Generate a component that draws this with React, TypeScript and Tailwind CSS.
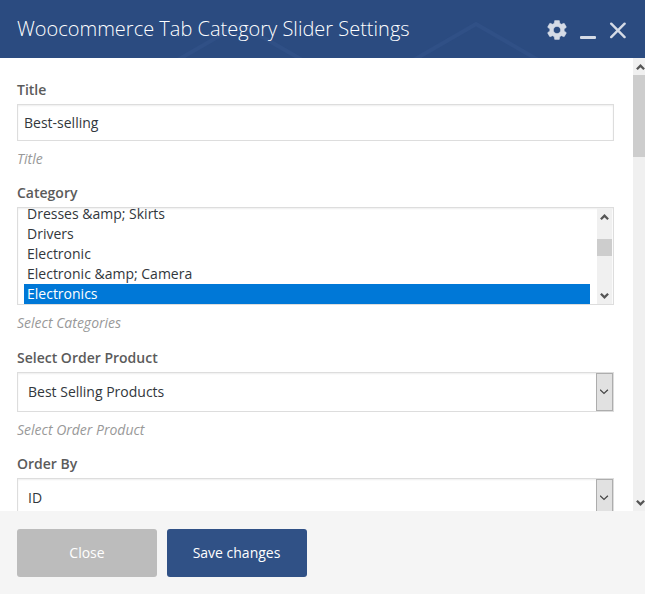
import React from "react";

function ScrollArrow({ up = false }: { up?: boolean }) {
  return (
    <svg
      width="9"
      height="8"
      viewBox="0 0 9 8"
      fill="none"
      stroke="#555555"
      strokeWidth="2.3"
      className="block shrink-0"
    >
      <path d={up ? "M.9 6.200 4.500 2.600 8.100 6.200" : "M.9 1.800 4.500 5.400 8.100 1.800"} />
    </svg>
  );
}

function SelectArrow() {
  return (
    <svg
      width="9"
      height="8"
      viewBox="0 0 9 8"
      fill="none"
      stroke="#444444"
      strokeWidth="1.200"
      className="block shrink-0"
    >
      <path d="M.1 1.700 4 5.500 7.900 1.700" />
    </svg>
  );
}

function Label({ children }: { children: React.ReactNode }) {
  return <div className="mb-1 h-5 text-sm leading-5 font-semibold text-[#5b5b5b]">{children}</div>;
}

function Hint({ children }: { children: React.ReactNode }) {
  return <div className="mt-2 h-5 text-sm leading-5 text-[#999999] italic">{children}</div>;
}

const fieldBox = "border border-[#dddddd] bg-white shadow-[inset_0_1px_2px_rgba(0,0,0,0.07)]";

function Select({ value }: { value: string }) {
  return (
    <div className={`flex h-10 items-stretch justify-between pl-2.5 text-sm text-[#32373c] ${fieldBox}`}>
      <span className="leading-[37px]">{value}</span>
      <span className="flex w-[17px] items-center justify-center border border-[#adadad] bg-[#e1e1e1]">
        <SelectArrow />
      </span>
    </div>
  );
}

const options = ["Dresses &amp; Skirts", "Drivers", "Electronic", "Electronic &amp; Camera", "Electronics"];

export default function App() {
  return (
    <div className="flex h-[594px] w-[645px] flex-col overflow-hidden bg-white font-['Open_Sans','Noto_Sans',sans-serif]">
      <header className="relative flex h-[58px] shrink-0 items-center justify-between bg-[#2b4b80] pr-[18px] pl-[17px]">
        <svg
          className="absolute top-0 left-0"
          width="645"
          height="58"
          fill="none"
          stroke="#305086"
          strokeWidth="4"
        >
          <path d="M176 61 240 24 304 61M412 61 476 24 540 61" />
        </svg>
        <h1 className="relative text-[20px] leading-[58px] font-light whitespace-nowrap text-white">
          Woocommerce Tab Category Slider Settings
        </h1>
        <div className="relative flex h-5 items-center text-[#d5dbe6]">
          <svg
            width="20"
            height="20"
            viewBox="2 2 20 20"
            fill="currentColor"
            stroke="currentColor"
            strokeWidth="0.5"
            className="mt-0.5"
          >
            <path d="M19.140 12.940c.04-.3.06-.61.06-.94 0-.32-.02-.64-.07-.94l2.030-1.580c.18-.14.23-.41.12-.61l-1.920-3.320c-.12-.22-.37-.29-.59-.22l-2.390.96c-.5-.38-1.030-.7-1.620-.94l-.36-2.540c-.04-.24-.24-.41-.48-.41h-3.840c-.24 0-.43.17-.47.41l-.36 2.540c-.59.24-1.130.57-1.620.94l-2.390-.96c-.22-.08-.47 0-.59.22L2.740 8.870c-.12.21-.08.47.12.61l2.030 1.580c-.05.3-.09.63-.09.94s.02.64.07.94l-2.030 1.580c-.18.14-.23.41-.12.61l1.920 3.320c.12.22.37.29.59.22l2.390-.96c.5.38 1.030.7 1.620.94l.36 2.540c.05.24.24.41.48.41h3.840c.24 0 .44-.17.47-.41l.36-2.540c.59-.24 1.130-.56 1.620-.94l2.390.96c.22.08.47 0 .59-.22l1.920-3.320c.12-.22.07-.47-.12-.61l-2.010-1.580zM12 15.600c-1.980 0-3.600-1.620-3.600-3.600s1.620-3.600 3.600-3.600 3.600 1.620 3.600 3.600-1.620 3.600-3.600 3.600z" />
          </svg>
          <span className="mt-[17px] ml-[13px] h-[3px] w-4 rounded-[1px] bg-[#d5dbe6]" />
          <svg
            width="17"
            height="17"
            viewBox="0 0 17 17"
            fill="none"
            stroke="currentColor"
            strokeWidth="2.400"
            strokeLinecap="round"
            className="mt-[3px] mr-px ml-[13px]"
          >
            <path d="m2.200 1.700 13.400 13.400m0-13.400L2.200 15.100" />
          </svg>
        </div>
      </header>

      <div className="flex h-[453px] shrink-0 overflow-hidden">
        <main className="w-[633px] shrink-0 pt-[22px] pr-[19px] pl-[17px]">
          <Label>Title</Label>
          <div className={`h-[37px] px-1.5 text-sm leading-[35px] text-[#32373c] ${fieldBox}`}>Best-selling</div>
          <Hint>Title</Hint>

          <div className="mt-[14px]">
            <Label>Category</Label>
            <div className={`flex h-[98px] overflow-hidden pr-px ${fieldBox}`}>
              <ul className="-mt-1 flex-1 pr-[7px] pl-1.5 text-sm leading-5 text-[#32373c]">
                {options.map((name, i) => (
                  <li key={name} className={i === 4 ? "h-5 bg-[#0078d7] pl-[3px] text-white" : "h-5 pl-[3px]"}>
                    {name}
                  </li>
                ))}
              </ul>
              <div className="flex w-[15px] flex-col items-center bg-[#f0f0f0]">
                <div className="flex h-[31px] items-start pt-[5px]">
                  <ScrollArrow up />
                </div>
                <div className="h-[17px] w-full bg-[#cdcdcd]" />
                <div className="flex flex-1 items-end pb-1">
                  <ScrollArrow />
                </div>
              </div>
            </div>
            <Hint>Select Categories</Hint>
          </div>

          <div className="mt-[15px]">
            <Label>Select Order Product</Label>
            <Select value="Best Selling Products" />
            <Hint>Select Order Product</Hint>
          </div>

          <div className="mt-[14px]">
            <Label>Order By</Label>
            <Select value="ID" />
          </div>
        </main>

        <div className="flex w-3 shrink-0 flex-col overflow-hidden bg-[#f0f0f0]">
          <div className="h-[17px] pt-[5px] pl-[3px]">
            <ScrollArrow up />
          </div>
          <div className="h-[82px] bg-[#cdcdcd]" />
          <div className="flex flex-1 items-end pb-1 pl-[3px]">
            <ScrollArrow />
          </div>
        </div>
      </div>

      <footer className="flex flex-1 gap-2.5 bg-[#f5f5f5] pt-[18px] pl-[17px]">
        <button className="h-12 w-[140px] rounded-[3px] bg-[#bcbcbc] text-sm text-white">Close</button>
        <button className="h-12 w-[140px] rounded-[3px] bg-[#305186] pr-px text-sm text-white">Save changes</button>
      </footer>
    </div>
  );
}
